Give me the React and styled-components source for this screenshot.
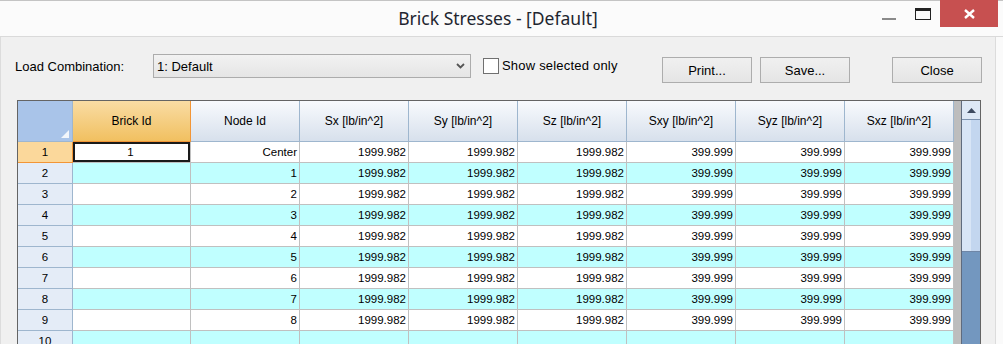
import React from "react";
import styled, { createGlobalStyle } from "styled-components";

const GlobalStyle = createGlobalStyle`
  html, body {
    margin: 0;
    padding: 0;
    height: 344px;
    overflow: hidden;
    background: #fafafa;
  }
  * {
    box-sizing: border-box;
  }
`;

const Window = styled.div`
  width: 1003px;
  height: 344px;
  display: flex;
  flex-direction: column;
  overflow: hidden;
  font-family: "Liberation Sans", Arial, sans-serif;
  color: #000;
`;

const TitleBar = styled.div`
  height: 37px;
  flex: none;
  display: grid;
  grid-template-columns: 1fr auto 1fr;
  background: #fbfbfb;
  border-top: 1px solid #c4c4c4;
  border-bottom: 1px solid #dadada;
`;

const Title = styled.div`
  grid-column: 2;
  align-self: center;
  font-family: "Noto Sans", "Open Sans", sans-serif;
  font-size: 17.5px;
  color: #1f2630;
  padding-bottom: 1px;
  margin-left: -7px;
`;

const Controls = styled.div`
  grid-column: 3;
  display: flex;
  justify-content: flex-end;
  align-items: flex-start;
  padding-right: 5px;
  margin-top: -1px;
`;

const CtrlButton = styled.div`
  width: ${({ $w }) => $w}px;
  margin-left: ${({ $ml }) => $ml || 0}px;
  height: 27px;
  display: flex;
  align-items: center;
  justify-content: center;
  background: ${({ $danger }) => ($danger ? "#c75050" : "transparent")};
`;

const Body = styled.div`
  width: 996px;
  flex: 1;
  background: #f0f0f0;
  border-left: 1px solid #dcdcdc;
  border-right: 1px solid #dcdcdc;
  padding: 17px 0 0 14px;
  display: flex;
  flex-direction: column;
`;

const Toolbar = styled.div`
  display: flex;
  align-items: flex-start;
  height: 29px;
  font-size: 13px;
`;

const Label = styled.div`
  width: 138px;
  line-height: 25px;
`;

const Combo = styled.div`
  width: 318px;
  height: 24px;
  border: 1px solid #acacac;
  background: linear-gradient(#f2f2f2, #e5e5e5);
  display: flex;
  align-items: center;
  justify-content: space-between;
  padding: 0 5px 0 3px;
`;

const CheckWrap = styled.label`
  width: 135px;
  display: flex;
  align-items: center;
  gap: 3px;
  margin: 4px 0 0 12px;
  line-height: 16px;
  letter-spacing: 0.2px;
`;

const Box = styled.span`
  width: 16px;
  height: 16px;
  border: 1px solid #707070;
  background: #fff;
`;

const Button = styled.div`
  width: 90px;
  height: 26px;
  margin: 3px 0 0 ${({ $ml }) => $ml}px;
  border: 1px solid #adadad;
  background: linear-gradient(#f0f0f0, #e5e5e5);
  display: flex;
  align-items: center;
  justify-content: center;
`;

const GridFrame = styled.div`
  margin: 17px 0 0 2px;
  width: 964px;
  height: 300px;
  border: 1px solid #646464;
  background: #bdbdbd;
  display: flex;
  justify-content: space-between;
`;

const Table = styled.div`
  width: 936px;
  display: grid;
  grid-template-columns: 55px 118px repeat(7, 109px);
  grid-auto-rows: 21px;
  grid-template-rows: 41px;
  align-content: start;
  font-size: 11.5px;
`;

const Corner = styled.div`
  position: relative;
  background: #a9c4e9;
  border-right: 1px solid #9eb6ce;
  border-bottom: 1px solid #9eb6ce;
`;

const CornerMark = styled.svg`
  position: absolute;
  right: 3px;
  bottom: 3px;
`;

const Head = styled.div`
  display: flex;
  align-items: center;
  justify-content: center;
  font-size: 12px;
  background: ${({ $sel }) =>
    $sel
      ? "linear-gradient(#f9dca4, #f1c060)"
      : "linear-gradient(#f8fafd, #d7e0ec)"};
  border-right: 1px solid ${({ $sel }) => ($sel ? "#f29536" : "#9eb6ce")};
  border-bottom: 1px solid ${({ $sel }) => ($sel ? "#f29536" : "#9eb6ce")};
  padding-bottom: 1px;
`;

const RowHead = styled.div`
  display: flex;
  align-items: center;
  justify-content: center;
  background: ${({ $sel }) => ($sel ? "#fbd89b" : "#e4ecf7")};
  border-right: 1px solid ${({ $sel }) => ($sel ? "#f29536" : "#9eb6ce")};
  border-bottom: 1px solid ${({ $sel }) => ($sel ? "#f29536" : "#9eb6ce")};
`;

const Cell = styled.div`
  display: flex;
  align-items: center;
  justify-content: ${({ $center }) => ($center ? "center" : "flex-end")};
  padding-right: 2px;
  background: ${({ $alt }) => ($alt ? "#c0ffff" : "#fff")};
  border-right: 1px solid #c0c0c0;
  border-bottom: 1px solid #c0c0c0;
  box-shadow: ${({ $current }) => ($current ? "inset 0 0 0 2px #1a1a1a" : "none")};
`;

const Scroll = styled.div`
  width: 19px;
  border-left: 1px solid #5f6b7e;
  background: #7397bf;
  display: flex;
  flex-direction: column;
`;

const UpButton = styled.div`
  height: 19px;
  background: #dde8f6;
  border-bottom: 1px solid #7b91ae;
  display: flex;
  align-items: center;
  justify-content: center;
`;

const Thumb = styled.div`
  height: 132px;
  background: linear-gradient(90deg, #d8e5f6 0 9px, #c3d6ef 9px);
  border-bottom: 1px solid #6f86a6;
`;

const headers = [
  "Node Id",
  "Sx [lb/in^2]",
  "Sy [lb/in^2]",
  "Sz [lb/in^2]",
  "Sxy [lb/in^2]",
  "Syz [lb/in^2]",
  "Sxz [lb/in^2]",
];

const rows = Array.from({ length: 12 }, (_, i) => ({
  n: i + 1,
  brick: i === 0 ? "1" : "",
  node: i === 0 ? "Center" : i < 9 ? String(i) : "",
  vals:
    i < 9
      ? ["1999.982", "1999.982", "1999.982", "399.999", "399.999", "399.999"]
      : ["", "", "", "", "", ""],
}));

export default function App() {
  return (
    <Window>
      <GlobalStyle />
      <TitleBar>
        <Title>Brick Stresses - [Default]</Title>
        <Controls>
          <CtrlButton $w={14}>
            <svg width="14" height="14" viewBox="0 0 14 14">
              <rect x="0" y="11" width="14" height="2" fill="#8a8a8a" />
            </svg>
          </CtrlButton>
          <CtrlButton $w={16} $ml={19}>
            <svg width="16" height="12" viewBox="0 0 16 12">
              <rect x="0.5" y="0.5" width="15" height="11" fill="none" stroke="#222" />
              <rect x="0" y="0" width="16" height="3" fill="#222" />
            </svg>
          </CtrlButton>
          <CtrlButton $w={58} $ml={9} $danger>
            <svg width="11" height="10" viewBox="0 0 11 10">
              <path d="M1 1 L10 9 M10 1 L1 9" stroke="#fff" strokeWidth="2.4" />
            </svg>
          </CtrlButton>
        </Controls>
      </TitleBar>

      <Body>
        <Toolbar>
          <Label>Load Combination:</Label>
          <Combo>
            <span>1: Default</span>
            <svg width="9" height="6" viewBox="0 0 9 6">
              <path d="M1 1 L4.5 4.5 L8 1" fill="none" stroke="#555" strokeWidth="1.8" />
            </svg>
          </Combo>
          <CheckWrap>
            <Box />
            Show selected only
          </CheckWrap>
          <Button $ml={44}>Print...</Button>
          <Button $ml={8}>Save...</Button>
          <Button $ml={42}>Close</Button>
        </Toolbar>

        <GridFrame>
          <Table>
            <Corner>
              <CornerMark width="8" height="8" viewBox="0 0 8 8">
                <path d="M8 0 L8 8 L0 8 Z" fill="#f2f6fb" />
              </CornerMark>
            </Corner>
            <Head $sel>Brick Id</Head>
            {headers.map((h) => (
              <Head key={h}>{h}</Head>
            ))}
            {rows.map((r, i) => {
              const alt = i % 2 === 1;
              return (
                <React.Fragment key={r.n}>
                  <RowHead $sel={i === 0}>{r.n}</RowHead>
                  <Cell $alt={alt} $center $current={i === 0}>
                    {r.brick}
                  </Cell>
                  <Cell $alt={alt}>{r.node}</Cell>
                  {r.vals.map((v, j) => (
                    <Cell key={j} $alt={alt}>
                      {v}
                    </Cell>
                  ))}
                </React.Fragment>
              );
            })}
          </Table>
          <Scroll>
            <UpButton>
              <svg width="9" height="5" viewBox="0 0 9 5">
                <path d="M0 5 L4.5 0 L9 5 Z" fill="#3d4a60" />
              </svg>
            </UpButton>
            <Thumb />
          </Scroll>
        </GridFrame>
      </Body>
    </Window>
  );
}
